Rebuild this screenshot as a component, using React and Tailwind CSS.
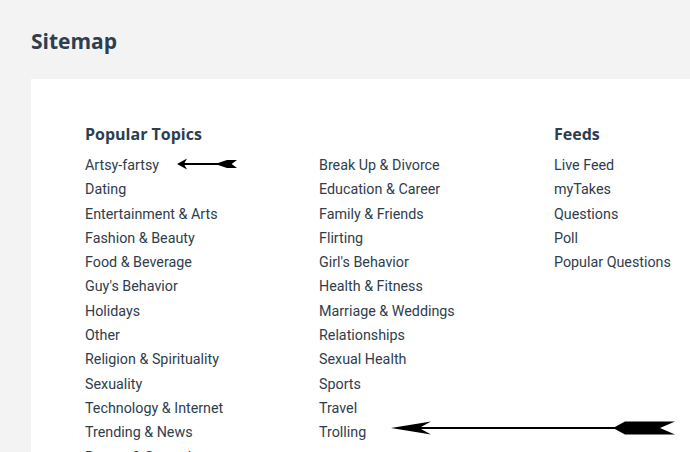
import React from 'react';

const col1 = [
  'Artsy-fartsy',
  'Dating',
  'Entertainment & Arts',
  'Fashion & Beauty',
  'Food & Beverage',
  "Guy's Behavior",
  'Holidays',
  'Other',
  'Religion & Spirituality',
  'Sexuality',
  'Technology & Internet',
  'Trending & News',
  'Beauty & Grooming',
];

const col2 = [
  'Break Up & Divorce',
  'Education & Career',
  'Family & Friends',
  'Flirting',
  "Girl's Behavior",
  'Health & Fitness',
  'Marriage & Weddings',
  'Relationships',
  'Sexual Health',
  'Sports',
  'Travel',
  'Trolling',
];

const feeds = ['Live Feed', 'myTakes', 'Questions', 'Poll', 'Popular Questions'];

const heading = "font-['Open_Sans',sans-serif] font-bold text-[16px] text-[#2c3e50] leading-[22px] h-[22px]";

const LinkList = ({ items }) => (
  <ul className="mt-[8px]">
    {items.map((t) => (
      <li key={t} className="h-[24.3px] leading-[24.3px] text-[14.3px] text-[#2f3d4c] font-['Roboto',sans-serif] whitespace-nowrap">
        {t}
      </li>
    ))}
  </ul>
);

// arrow pointing left: barbed head, thin shaft, notched fletching
const Arrow = ({ className, width, head = 11, headH = 10, fletch = 20, tall = 8 }) => {
  const c = 8;
  return (
    <svg className={className} width={width} height="16" viewBox={`0 0 ${width} 16`}>
      <path
        d={`M0 ${c} L${head} ${c - headH / 2} L${head * 0.75} ${c - 1} L${width - fletch} ${c - 1} L${width - fletch} ${c + 1} L${head * 0.75} ${c + 1} L${head} ${c + headH / 2} Z`}
        fill="#000"
      />
      <path
        d={`M${width - fletch - 6} ${c} L${width - fletch + 6} ${c - tall / 2} L${width} ${c - tall / 2} L${width - Math.min(15, fletch / 3)} ${c} L${width} ${c + tall / 2} L${width - fletch + 6} ${c + tall / 2} Z`}
        fill="#000"
      />
    </svg>
  );
};

export default function App() {
  return (
    <div className="relative w-[690px] h-[452px] overflow-hidden bg-[#f3f3f3]">
      <h1 className="pl-[31px] pt-[26px] h-[79px] font-['Open_Sans',sans-serif] font-bold text-[21px] leading-[30px] text-[#2c3e50]">
        Sitemap
      </h1>
      <div className="ml-[31px] bg-white h-[400px] pt-[44px] pl-[54px] flex">
        <div className="w-[234px] shrink-0">
          <div className={heading}>Popular Topics</div>
          <LinkList items={col1} />
        </div>
        <div className="w-[235px] shrink-0">
          <div className={heading}></div>
          <LinkList items={col2} />
        </div>
        <div className="w-[200px] shrink-0">
          <div className={heading}></div>
          <div className="-mt-[22px]">
            <div className={heading}>Feeds</div>
          </div>
          <LinkList items={feeds} />
        </div>
      </div>
      <Arrow className="absolute left-[177px] top-[156px]" width={60} head={10} headH={11} fletch={16} tall={8} />
      <Arrow className="absolute left-[391px] top-[420px]" width={284} head={40} headH={13} fletch={56} tall={13} />
    </div>
  );
}
